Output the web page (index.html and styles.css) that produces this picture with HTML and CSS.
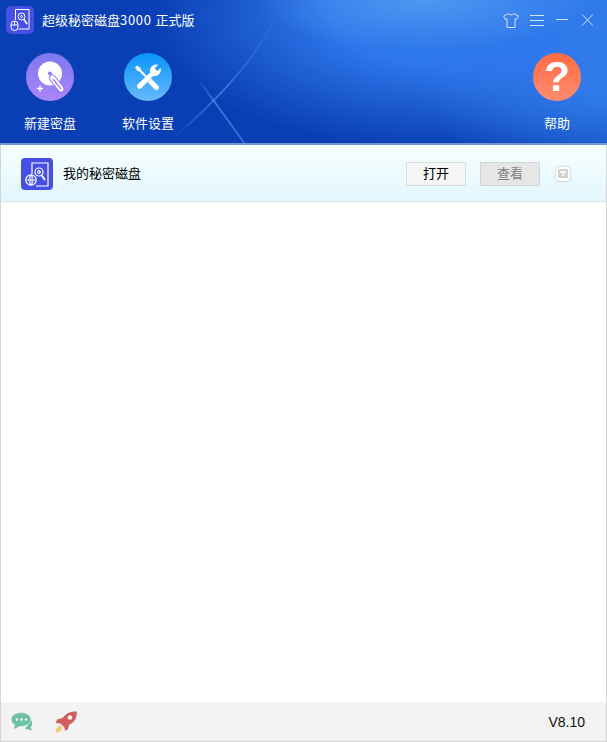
FILE: index.html
```html
<!DOCTYPE html>
<html lang="zh-CN">
<head>
    <meta charset="UTF-8">
    <meta name="viewport" content="width=device-width, initial-scale=1.0">
    <title>超级秘密磁盘3000 正式版</title>

    <link rel="stylesheet" href="styles.css">
</head>
<body>
    <div class="app">
        <header class="header">
            <svg class="streaks" width="607" height="145" viewBox="0 0 607 145">
                <defs>
                    <linearGradient id="streak-fade" x1="0" y1="1" x2="1" y2="0">
                        <stop offset="0" stop-color="#5f9ff5" stop-opacity="0"/>
                        <stop offset="0.35" stop-color="#5f9ff5" stop-opacity="0.6"/>
                        <stop offset="0.7" stop-color="#5f9ff5" stop-opacity="0.25"/>
                        <stop offset="0.95" stop-color="#5f9ff5" stop-opacity="0"/>
                    </linearGradient>
                    <linearGradient id="streak-down" x1="0" y1="0" x2="1" y2="1">
                        <stop offset="0" stop-color="#5f9ff5" stop-opacity="0"/>
                        <stop offset="0.35" stop-color="#5f9ff5" stop-opacity="0.6"/>
                        <stop offset="1" stop-color="#5f9ff5" stop-opacity="0.5"/>
                    </linearGradient>
                    <filter id="soft" x="-20%" y="-20%" width="140%" height="140%">
                        <feGaussianBlur stdDeviation="0.7"/>
                    </filter>
                </defs>
                <path d="M172 139 C208 108 262 58 283 0" fill="none" stroke="url(#streak-fade)" stroke-width="1.600" filter="url(#soft)"/>
                <path d="M198 79 L245 144" fill="none" stroke="url(#streak-down)" stroke-width="1.800" filter="url(#soft)"/>
            </svg>

            <div class="titlebar">
                <div class="app-logo">
                    <svg width="28" height="28" viewBox="0 0 28 28" fill="none" stroke="#fff" stroke-width="1">
                        <path d="M9.500 14 V3.500 H23 V23 H12.500"/>
                        <circle cx="15.500" cy="10.500" r="3.500"/>
                        <circle cx="15.500" cy="10.500" r="1"/>
                        <path d="M18 13.500 L21 18" stroke-width="1.600"/>
                        <rect x="5" y="15" width="7" height="9.500" rx="3.500" fill="#4650e6"/>
                        <path d="M5 19 H12 M8.500 15 V19"/>
                    </svg>
                </div>
                <span class="app-title">超级秘密磁盘<span class="title-num">3000</span> 正式版</span>
                <div class="window-btns">
                    <svg class="shirt" width="16" height="15" viewBox="0 0 16 15" fill="none" stroke="#d5e2f8" stroke-width="1">
                        <path d="M5.300 0.600 C6 2.400 10 2.400 10.700 0.600 L15.400 3 L13.600 6.600 L12 5.800 V14.500 H4 V5.800 L2.400 6.600 L0.600 3 Z"/>
                    </svg>
                    <svg class="menu" width="14" height="12" viewBox="0 0 14 12" stroke="#d5e2f8" stroke-width="1">
                        <path d="M0 1.500 H14 M0 6.500 H14 M0 11.500 H14"/>
                    </svg>
                    <svg class="minimize" width="12" height="12" viewBox="0 0 12 12" stroke="#d5e2f8" stroke-width="1">
                        <path d="M0 5.500 H12"/>
                    </svg>
                    <svg class="close" width="11" height="12" viewBox="0 0 11 12" stroke="#d5e2f8" stroke-width="1" fill="none">
                        <path d="M0.200 0.500 L10.800 11.500 M10.800 0.500 L0.200 11.500"/>
                    </svg>
                </div>
            </div>

            <nav class="tools">
                <div class="tool">
                    <div class="tool-icon tool-icon-new">
                        <svg width="48" height="48" viewBox="0 0 48 48">
                            <circle cx="24" cy="20.500" r="12" fill="#fff"/>
                            <circle cx="24" cy="20.500" r="2" fill="#8f7df5"/>
                            <path d="M26.500 25 L35 36" stroke="#9a82f5" stroke-width="7" stroke-linecap="round"/>
                            <path d="M26.500 25 L35 36" stroke="#fff" stroke-width="5" stroke-linecap="round"/>
                            <path d="M27.500 26.500 L34.500 35.500" stroke="#a285f6" stroke-width="1.500" stroke-linecap="round"/>
                            <path d="M11 35.500 H17 M14 32.500 V38.500" stroke="#fff" stroke-width="1.300"/>
                        </svg>
                    </div>
                    <span class="tool-label">新建密盘</span>
                </div>
                <div class="tool">
                    <div class="tool-icon tool-icon-settings">
                        <svg width="48" height="48" viewBox="0 0 48 48" fill="#fff">
                            <path d="M11 14.500 L13 12.500 L16.500 15 L17 17 L25.500 25.500 L24 27 L15.500 18.500 L13.500 18 Z"/>
                            <path d="M26.500 25 L34.500 33 A2.500 2.500 0 0 1 31 36.500 L23 28.500 Z"/>
                            <path d="M36.500 15 L33.500 18 L30.500 15.500 L34 12 A6 6 0 0 0 26.300 19.600 L13.500 31.500 A2.700 2.700 0 0 0 17.300 35.300 L29.500 22.800 A6 6 0 0 0 36.500 15 Z" stroke="#3fa9fb" stroke-width="1" paint-order="stroke"/>
                        </svg>
                    </div>
                    <span class="tool-label">软件设置</span>
                </div>
                <div class="tool tool-help">
                    <div class="tool-icon tool-icon-help">?</div>
                    <span class="tool-label">帮助</span>
                </div>
            </nav>
        </header>

        <main class="content">
            <div class="disk-row">
                <div class="disk-logo">
                    <svg width="32" height="32" viewBox="0 0 32 32" fill="none" stroke="#fff" stroke-width="1.200">
                        <path d="M11 16 V5 H27 V28 H15"/>
                        <circle cx="18" cy="14" r="4"/>
                        <circle cx="18" cy="14" r="1.300"/>
                        <path d="M20.500 17 L24 22" stroke-width="1.800"/>
                        <circle cx="10" cy="22" r="5.200" fill="#4650e6"/>
                        <path d="M4.800 22 H15.200 M10 16.800 V27.200 M10 16.800 C7.500 19 7.500 25 10 27.200 M10 16.800 C12.500 19 12.500 25 10 27.200" stroke-width="0.900"/>
                    </svg>
                </div>
                <span class="disk-name">我的秘密磁盘</span>
                <button class="btn">打开</button>
                <button class="btn btn-disabled">查看</button>
                <div class="disk-more">
                    <svg width="10" height="9" viewBox="0 0 10 9">
                        <rect width="10" height="9" rx="1" fill="#d2d2d2"/>
                        <path d="M2 3 H8 M5 3 V7" stroke="#fff" stroke-width="1.500" fill="none"/>
                    </svg>
                </div>
            </div>
        </main>

        <footer class="footer">
            <svg class="chat-icon" width="22" height="19" viewBox="0 0 22 19">
                <path d="M20.500 8 C22 11 21 14 19.500 15.500 L21 18.500 L14 16.500 Z" fill="#6dbfa6"/>
                <ellipse cx="10" cy="7.500" rx="10" ry="7" fill="#6dbfa6" stroke="#f3f3f3" stroke-width="0.600"/>
                <path d="M4 12 L3 17 L9 14 Z" fill="#6dbfa6"/>
                <circle cx="6" cy="7.500" r="1.200" fill="#fff"/>
                <circle cx="10.500" cy="7.500" r="1.200" fill="#fff"/>
                <circle cx="15" cy="7.500" r="1.200" fill="#fff"/>
            </svg>
            <svg class="rocket-icon" width="22" height="22" viewBox="0 0 22 22">
                <path d="M0.500 21.500 C0.500 18 2.500 15 5.500 14.500 L7.500 16.500 C7 19.500 4 21.500 0.500 21.500 Z" fill="#f4cc7c"/>
                <path d="M21.800 0.500 C15 0.200 10.500 3 7.500 7 L2 8.500 L0.800 12 L5.500 12.500 L9.500 16.500 L10 20 L13 18 L14 14 C19.500 11 22.200 7 21.800 0.500 Z" fill="#cf5f5f"/>
                <circle cx="15" cy="6.500" r="2.200" fill="#fff"/>
            </svg>
            <span class="version">V8.10</span>
        </footer>
    </div>
</body>
</html>
```

FILE: styles.css
```css
* {
    box-sizing: border-box;
}

body {
    margin: 0;
    font-family: "Noto Sans CJK SC", "Liberation Sans", sans-serif;
    background: #fff;
}

.app {
    display: flex;
    flex-direction: column;
    width: 607px;
    height: 742px;
    border: 1px solid #d4d4d4;
    border-top: 0;
}

/* header */
.header {
    position: relative;
    flex: none;
    height: 145px;
    margin: 0 -1px;
    overflow: hidden;
    border-bottom: 2px solid #6f97d6;
    background:
        radial-gradient(ellipse 170px 50px at 425px 0, #4f97f0 0%, rgba(79, 151, 240, 0) 100%),
        radial-gradient(ellipse 290px 135px at 440px 15px, #2f78ec 0%, #2f78ec 35%, rgba(47, 120, 236, 0) 100%),
        radial-gradient(ellipse 220px 170px at 620px 30px, #3a82ea 0%, #2f7ae8 40%, rgba(47, 122, 232, 0) 100%),
        #0a3eb4;
}

.streaks {
    position: absolute;
    top: 0;
    left: 0;
}

.titlebar {
    position: relative;
    display: flex;
    align-items: center;
    height: 28px;
    margin-top: 6px;
    padding-left: 6px;
}

.app-logo {
    width: 28px;
    height: 28px;
    border-radius: 5px;
    background: #4650e6;
}

.app-logo svg,
.disk-logo svg {
    display: block;
}

.app-title {
    margin-left: 8px;
    color: #fff;
    font-size: 13px;
    line-height: 28px;
    word-spacing: 1px;
}

.title-num {
    letter-spacing: 0.7px;
}

.window-btns {
    display: flex;
    align-items: center;
    margin-left: auto;
    padding-right: 14px;
}

.shirt {
    margin-right: 11px;
}

.menu {
    margin-right: 12px;
}

.minimize {
    margin-right: 14px;
}

.tools {
    position: relative;
    display: flex;
    margin-top: 19px;
    padding: 0 1px;
}

.tool {
    display: flex;
    flex-direction: column;
    align-items: center;
    width: 98px;
}

.tool-help {
    margin-left: auto;
}

.tool-icon {
    width: 48px;
    height: 48px;
    border-radius: 50%;
}

.tool-icon svg {
    display: block;
}

.tool-icon-new {
    background: linear-gradient(#7f78ee, #ab85fb);
}

.tool-icon-settings {
    background: linear-gradient(#0a93fb, #67bafc);
}

.tool-icon-help {
    background: linear-gradient(#ff6c44, #ff8c70);
    color: #fff;
    font-family: "Liberation Sans", sans-serif;
    font-size: 42px;
    font-weight: bold;
    line-height: 48px;
    text-align: center;
}

.tool-label {
    margin-top: 12px;
    color: #fff;
    font-size: 13px;
    line-height: 20px;
}

/* list */
.content {
    flex: 1;
}

.disk-row {
    display: flex;
    align-items: center;
    height: 57px;
    padding-top: 1px;
    padding-left: 20px;
    border-bottom: 1px solid #dfe3e6;
    background: linear-gradient(#f6ffff, #e3f6ff);
}

.disk-logo {
    width: 32px;
    height: 32px;
    border-radius: 4px;
    background: #4650e6;
}

.disk-name {
    margin-left: 10px;
    margin-bottom: 2px;
    color: #000;
    font-size: 13px;
}

.btn {
    width: 60px;
    height: 24px;
    padding: 0 0 2px;
    border: 1px solid #dcdcdc;
    background: #f5f5f5;
    color: #000;
    font-family: inherit;
    font-size: 13px;
}

.disk-name + .btn {
    margin-left: auto;
}

.btn-disabled {
    margin-left: 14px;
    border-color: #d6d6d6;
    background: #e6e6e6;
    color: #7d7d7d;
}

.disk-more {
    display: flex;
    align-items: center;
    justify-content: center;
    width: 14px;
    height: 14px;
    margin: 0 36px 0 16px;
    border-radius: 3px;
    background: #fff;
    box-shadow: 0 0 2px #9a9a9a;
}

/* footer */
.footer {
    display: flex;
    flex: none;
    align-items: center;
    height: 39px;
    padding: 0 21px 0 10px;
    background: #f3f3f3;
}

.rocket-icon {
    margin-left: 22px;
}

.version {
    margin-left: auto;
    color: #111;
    font-family: "Liberation Sans", sans-serif;
    font-size: 14px;
}
```
